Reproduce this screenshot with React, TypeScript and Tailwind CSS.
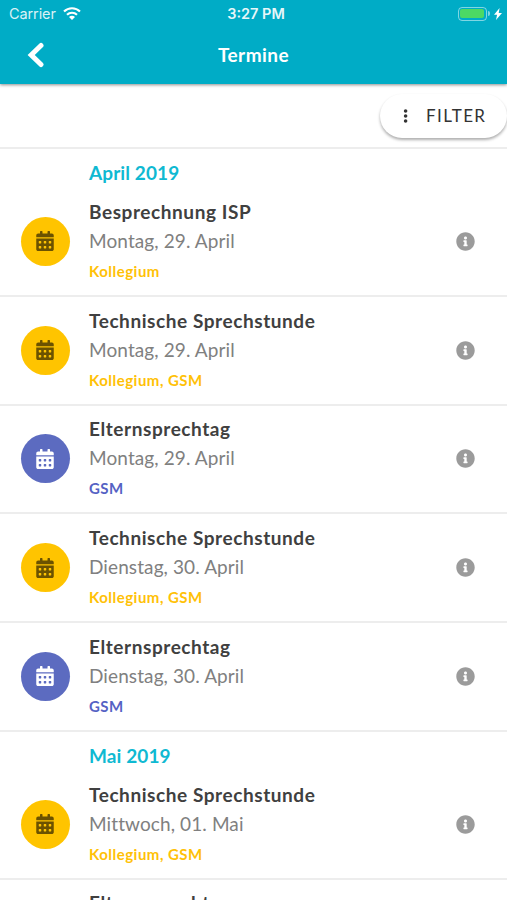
import { FaCalendarAlt, FaInfoCircle } from "react-icons/fa";

type Group = "kollegium" | "gsm";

interface Appointment {
  title: string;
  date: string;
  tags: string;
  group: Group;
}

interface Month {
  label: string;
  items: Appointment[];
}

const months: Month[] = [
  {
    label: "April 2019",
    items: [
      { title: "Besprechnung ISP", date: "Montag, 29. April", tags: "Kollegium", group: "kollegium" },
      { title: "Technische Sprechstunde", date: "Montag, 29. April", tags: "Kollegium, GSM", group: "kollegium" },
      { title: "Elternsprechtag", date: "Montag, 29. April", tags: "GSM", group: "gsm" },
      { title: "Technische Sprechstunde", date: "Dienstag, 30. April", tags: "Kollegium, GSM", group: "kollegium" },
      { title: "Elternsprechtag", date: "Dienstag, 30. April", tags: "GSM", group: "gsm" },
    ],
  },
  {
    label: "Mai 2019",
    items: [
      { title: "Technische Sprechstunde", date: "Mittwoch, 01. Mai", tags: "Kollegium, GSM", group: "kollegium" },
      { title: "Elternsprechtag", date: "Mittwoch, 01. Mai", tags: "GSM", group: "gsm" },
    ],
  },
];

const badgeClass: Record<Group, string> = {
  kollegium: "bg-[#ffc400] text-[#6b5200]",
  gsm: "bg-[#5c6bc0] text-white",
};

const tagClass: Record<Group, string> = {
  kollegium: "text-[#ffc107]",
  gsm: "text-[#5562c4]",
};

function StatusBar() {
  return (
    <div className="grid h-7 grid-cols-3 items-center pl-[9px] pr-[5px] font-['Inter',sans-serif] text-[14.5px] leading-none text-white">
      <div className="flex items-center gap-[7px]">
        <span className="tracking-[-0.1px] opacity-85">Carrier</span>
        <svg className="-mt-px" width="18" height="13" viewBox="0 0 18 13" fill="none" stroke="currentColor" strokeWidth="2.1">
          <path d="M1 4.6a11.4 11.4 0 0 1 16 0" />
          <path d="M4 7.8a7.1 7.1 0 0 1 10 0" />
          <path d="M9 13 6 10a4.2 4.2 0 0 1 6 0Z" fill="currentColor" stroke="none" />
        </svg>
      </div>
      <span className="justify-self-center pl-px font-semibold opacity-90">3:27 PM</span>
      <div className="-mt-px flex items-center justify-self-end">
        <div className="h-[14px] w-[29px] rounded-[4px] border border-white/50 p-[1.5px]">
          <div className="h-full rounded-[2px] bg-[#4cd964]" />
        </div>
        <div className="ml-px h-[5px] w-[2px] rounded-r-full bg-white/50" />
        <svg className="ml-[4px]" width="8" height="12" viewBox="0 0 8 12" fill="currentColor">
          <path d="M5.6 0 0 6.8h3.1L2 12l6-7H4.7Z" />
        </svg>
      </div>
    </div>
  );
}

function Header() {
  return (
    <header className="relative z-10 h-[84px] shrink-0 bg-[#00acc6] shadow-[0_1px_3px_rgba(0,0,0,0.45)]">
      <StatusBar />
      <div className="grid h-[54px] grid-cols-[70px_1fr_70px] items-center text-white">
        <button className="justify-self-center" aria-label="Zurück">
          <svg width="17" height="26" viewBox="0 0 17 26" fill="none" stroke="currentColor" strokeWidth="5" strokeLinecap="round">
            <path d="M14 3.5 4.2 13 14 22.5" />
          </svg>
        </button>
        <h1 className="text-center text-[19px] font-bold tracking-[0.45px]">Termine</h1>
      </div>
    </header>
  );
}

function FilterBar() {
  return (
    <div className="flex h-[65px] shrink-0 items-start justify-end border-b-2 border-[#ededed] pt-[10px]">
      <button className="flex h-11 w-[127px] items-center rounded-full bg-white pl-[23px] text-[#333] shadow-[0_2px_3px_rgba(0,0,0,0.32)]">
        <svg width="6" height="14" viewBox="0 0 6 14" fill="currentColor">
          <circle cx="2.6" cy="2" r="1.8" />
          <circle cx="2.6" cy="7" r="1.8" />
          <circle cx="2.6" cy="12" r="1.8" />
        </svg>
        <span className="-mt-px ml-[17px] text-[17px] leading-none tracking-[1.4px]">FILTER</span>
      </button>
    </div>
  );
}

function AppointmentRow({ item }: { item: Appointment }) {
  return (
    <li className="flex h-[108.75px] items-center border-b-2 border-[#ededed] pl-[20.5px] pr-8">
      <div className={`flex size-[49px] items-center justify-center rounded-full ${badgeClass[item.group]}`}>
        <FaCalendarAlt className="h-5 w-[18px]" />
      </div>
      <div className="ml-[19.5px] flex-1">
        <p className="text-[19px] font-bold leading-[29px] tracking-[0.57px] text-[#404040]">{item.title}</p>
        <p className="text-[19px] leading-[30px] tracking-[0.1px] text-[#808080]">{item.date}</p>
        <p className={`text-[15px] font-bold leading-[30px] tracking-[0.48px] ${tagClass[item.group]}`}>{item.tags}</p>
      </div>
      <FaInfoCircle className="size-[19px] text-[#9b9b9b]" />
    </li>
  );
}

export default function App() {
  return (
    <div className="flex h-screen flex-col overflow-hidden bg-white font-['Lato',sans-serif]">
      <Header />
      <FilterBar />
      <main className="min-h-0 flex-1 overflow-hidden">
        {months.map((month) => (
          <section key={month.label}>
            <h2 className="h-[39px] pl-[89px] pt-[9px] text-[19px] font-bold leading-[30px] tracking-[0.1px] text-[#0fb9d2]">
              {month.label}
            </h2>
            <ul>
              {month.items.map((item, i) => (
                <AppointmentRow key={i} item={item} />
              ))}
            </ul>
          </section>
        ))}
      </main>
    </div>
  );
}
